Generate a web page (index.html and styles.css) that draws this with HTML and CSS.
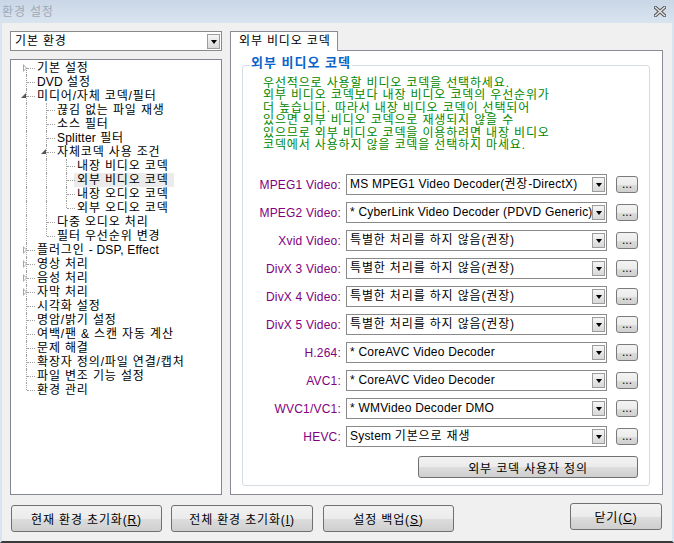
FILE: index.html
```html
<!DOCTYPE html>
<html lang="ko">
<head>
<meta charset="utf-8">
<title>환경 설정</title>
<link rel="stylesheet" href="styles.css">
</head>
<body>
<div class="window">
  <div class="titlebar">
    <span class="title k">환경 설정</span>
    <svg class="close" width="12" height="11" viewBox="0 0 12 11">
      <path d="M1.5 1.5 L10.5 9.5 M10.5 1.5 L1.5 9.5" stroke="#555" stroke-width="3.4" stroke-linecap="square"/>
      <path d="M1.5 1.5 L10.5 9.5 M10.5 1.5 L1.5 9.5" stroke="#e8e8e8" stroke-width="1.4" stroke-linecap="square"/>
    </svg>
  </div>
  <div class="client">
    <div class="main">
      <div class="left">
        <div class="combo combo-main">
          <span class="combo-text k">기본 환경</span>
          <span class="combo-arrow"></span>
        </div>
        <div class="tree">
          <div class="row"><span class="node first"><span class="exp closed"></span></span><span class="label">기본 설정</span></div>
          <div class="row"><span class="node mid"></span><span class="label"><span class="l">DVD</span> 설정</span></div>
          <div class="row"><span class="node mid"><span class="exp open"></span></span><span class="label">미디어/자체 코덱/필터</span></div>
          <div class="row"><span class="ind v"></span><span class="node mid"></span><span class="label">끊김 없는 파일 재생</span></div>
          <div class="row"><span class="ind v"></span><span class="node mid"></span><span class="label">소스 필터</span></div>
          <div class="row"><span class="ind v"></span><span class="node mid"></span><span class="label"><span class="l">Splitter</span> 필터</span></div>
          <div class="row"><span class="ind v"></span><span class="node mid"><span class="exp open"></span></span><span class="label">자체코덱 사용 조건</span></div>
          <div class="row"><span class="ind v"></span><span class="ind v"></span><span class="node mid"></span><span class="label">내장 비디오 코덱</span></div>
          <div class="row"><span class="ind v"></span><span class="ind v"></span><span class="node mid"></span><span class="label selected">외부 비디오 코덱</span></div>
          <div class="row"><span class="ind v"></span><span class="ind v"></span><span class="node mid"></span><span class="label">내장 오디오 코덱</span></div>
          <div class="row"><span class="ind v"></span><span class="ind v"></span><span class="node last"></span><span class="label">외부 오디오 코덱</span></div>
          <div class="row"><span class="ind v"></span><span class="node mid"></span><span class="label">다중 오디오 처리</span></div>
          <div class="row"><span class="ind v"></span><span class="node last"></span><span class="label">필터 우선순위 변경</span></div>
          <div class="row"><span class="node mid"><span class="exp closed"></span></span><span class="label">플러그인 <span class="l">- DSP, Effect</span></span></div>
          <div class="row"><span class="node mid"><span class="exp closed"></span></span><span class="label">영상 처리</span></div>
          <div class="row"><span class="node mid"><span class="exp closed"></span></span><span class="label">음성 처리</span></div>
          <div class="row"><span class="node mid"><span class="exp closed"></span></span><span class="label">자막 처리</span></div>
          <div class="row"><span class="node mid"></span><span class="label">시각화 설정</span></div>
          <div class="row"><span class="node mid"></span><span class="label">명암/밝기 설정</span></div>
          <div class="row"><span class="node mid"></span><span class="label">여백/팬 &amp; 스캔 자동 계산</span></div>
          <div class="row"><span class="node mid"></span><span class="label">문제 해결</span></div>
          <div class="row"><span class="node mid"></span><span class="label">확장자 정의/파일 연결/캡처</span></div>
          <div class="row"><span class="node mid"></span><span class="label">파일 변조 기능 설정</span></div>
          <div class="row"><span class="node last"></span><span class="label">환경 관리</span></div>
        </div>
      </div>
      <div class="right">
        <div class="tabs"><div class="tab k">외부 비디오 코덱</div></div>
        <div class="panel">
          <div class="group">
            <div class="group-title">외부 비디오 코덱</div>
            <p class="info k">우선적으로 사용할 비디오 코덱을 선택하세요.<br>외부 비디오 코덱보다 내장 비디오 코덱의 우선순위가<br>더 높습니다. 따라서 내장 비디오 코덱이 선택되어<br>있으면 외부 비디오 코덱으로 재생되지 않을 수<br>있으므로 외부 비디오 코덱을 이용하려면 내장 비디오<br>코덱에서 사용하지 않을 코덱을 선택하지 마세요.</p>
            <div class="codecs">
              <div class="codec-row"><span class="codec-label">MPEG1 Video:</span><div class="combo"><span class="combo-text">MS MPEG1 Video Decoder(<span class="k">권장</span>-DirectX)</span><span class="combo-arrow"></span></div><button class="more">...</button></div>
              <div class="codec-row"><span class="codec-label">MPEG2 Video:</span><div class="combo"><span class="combo-text">* CyberLink Video Decoder (PDVD Generic)</span><span class="combo-arrow"></span></div><button class="more">...</button></div>
              <div class="codec-row"><span class="codec-label">Xvid Video:</span><div class="combo"><span class="combo-text k">특별한 처리를 하지 않음(권장)</span><span class="combo-arrow"></span></div><button class="more">...</button></div>
              <div class="codec-row"><span class="codec-label">DivX 3 Video:</span><div class="combo"><span class="combo-text k">특별한 처리를 하지 않음(권장)</span><span class="combo-arrow"></span></div><button class="more">...</button></div>
              <div class="codec-row"><span class="codec-label">DivX 4 Video:</span><div class="combo"><span class="combo-text k">특별한 처리를 하지 않음(권장)</span><span class="combo-arrow"></span></div><button class="more">...</button></div>
              <div class="codec-row"><span class="codec-label">DivX 5 Video:</span><div class="combo"><span class="combo-text k">특별한 처리를 하지 않음(권장)</span><span class="combo-arrow"></span></div><button class="more">...</button></div>
              <div class="codec-row"><span class="codec-label">H.264:</span><div class="combo"><span class="combo-text">* CoreAVC Video Decoder</span><span class="combo-arrow"></span></div><button class="more">...</button></div>
              <div class="codec-row"><span class="codec-label">AVC1:</span><div class="combo"><span class="combo-text">* CoreAVC Video Decoder</span><span class="combo-arrow"></span></div><button class="more">...</button></div>
              <div class="codec-row"><span class="codec-label">WVC1/VC1:</span><div class="combo"><span class="combo-text">* WMVideo Decoder DMO</span><span class="combo-arrow"></span></div><button class="more">...</button></div>
              <div class="codec-row"><span class="codec-label">HEVC:</span><div class="combo"><span class="combo-text">System <span class="k">기본으로 재생</span></span><span class="combo-arrow"></span></div><button class="more">...</button></div>
              <div class="custom-row"><button class="btn btn-custom k">외부 코덱 사용자 정의</button></div>
            </div>
          </div>
        </div>
      </div>
    </div>
    <div class="buttons">
      <button class="btn btn-b1 k">현재 환경 초기화(<u>R</u>)</button>
      <button class="btn btn-b2 k">전체 환경 초기화(<u>I</u>)</button>
      <button class="btn btn-b3 k">설정 백업(<u>S</u>)</button>
      <button class="btn btn-close k">닫기(<u>C</u>)</button>
    </div>
  </div>
</div>
</body>
</html>
```
FILE: styles.css
```css
* { box-sizing: border-box; }
html, body { margin: 0; padding: 0; }
body {
  width: 674px; height: 543px; overflow: hidden;
  font-family: "Liberation Sans", "Noto Sans CJK KR", sans-serif;
  font-size: 12px; color: #000; letter-spacing: 0.2px;
}
.k { letter-spacing: 0.85px; }
.l { letter-spacing: 0.2px; }
.window { width: 674px; height: 543px; display: flex; flex-direction: column; background: #f0f0f0; }
.titlebar {
  height: 23px; flex: none;
  background: linear-gradient(#c9d6e5, #d9e4f1);
  display: flex; align-items: center; justify-content: space-between;
  padding: 0 8px 0 2px;
}
.title { color: #9ea9b6; font-size: 12px; line-height: 14px; }
.close { display: block; }
.client {
  flex: 1; display: flex; flex-direction: column;
  border-left: 2px solid #d9e4f1; border-right: 2px solid #d9e4f1; border-bottom: 2px solid #3a3a3a;
  padding: 8px 9px 0 8px;
}
.main { display: flex; gap: 8px; }
.left { width: 212px; display: flex; flex-direction: column; gap: 8px; }
.right { width: 433px; display: flex; flex-direction: column; }

/* combo boxes */
.combo {
  width: 261px; height: 21px; flex: none;
  border: 1px solid #8a8a8a; background: #fff;
  display: flex; align-items: center; padding-left: 3px;
}
.combo-main { width: 212px; height: 20px; padding-left: 4px; }
.combo-text { flex: 1; white-space: nowrap; overflow: hidden; line-height: 15px; }
.combo-arrow {
  width: 13px; height: 15px; flex: none; margin-right: 1px;
  border: 1px solid #9c9c9c;
  background: linear-gradient(#f6f6f6, #d8d8d8);
  display: flex; align-items: center; justify-content: center;
}
.combo-arrow::after {
  content: ""; width: 0; height: 0;
  border-left: 3px solid transparent; border-right: 3px solid transparent;
  border-top: 4px solid #000; margin-top: 1px;
}

/* tree */
.tree {
  height: 436px; background: #fff; border: 1px solid #828790;
  padding: 1px 0 0 5px;
}
.row { display: flex; height: 14px; align-items: stretch; }
.ind, .node { width: 20px; flex: none; position: relative; }
.ind.v::before {
  content: ""; position: absolute; left: 10px; top: 0; bottom: 0;
  border-left: 1px dotted #a0a0a0;
}
.node::before {
  content: ""; position: absolute; left: 10px; top: 0; bottom: 0;
  border-left: 1px dotted #a0a0a0;
}
.node.first::before { top: 7px; }
.node.last::before { bottom: 7px; }
.node::after {
  content: ""; position: absolute; left: 11px; right: 1px; top: 7px;
  border-top: 1px dotted #a0a0a0;
}
.exp { position: absolute; z-index: 1; }
.exp.closed { left: 7px; top: 3px; width: 5px; height: 9px; }
.exp.closed::before {
  content: ""; position: absolute; left: 0; top: 0;
  border-top: 4px solid transparent; border-bottom: 4px solid transparent;
  border-left: 4px solid #a6a6a6;
}
.exp.closed::after {
  content: ""; position: absolute; left: 1px; top: 2px;
  border-top: 2px solid transparent; border-bottom: 2px solid transparent;
  border-left: 2px solid #fff;
}
.exp.open {
  left: 5px; top: 4px; width: 0; height: 0;
  border-left: 5px solid transparent; border-bottom: 5px solid #555;
}
.label { white-space: nowrap; line-height: 14px; padding: 0 3px 0 1px; letter-spacing: 0.85px; }
.label.selected { background: #ebebeb; margin-left: -2px; padding-left: 3px; padding-right: 5px; }

/* tab + panel */
.tabs { display: flex; height: 20px; position: relative; z-index: 1; margin-bottom: -1px; }
.tab {
  width: 108px; height: 20px; background: #fff;
  border: 1px solid #898c95; border-bottom: none;
  padding-left: 8px; line-height: 19px; white-space: nowrap;
}
.panel {
  height: 445px; background: #fff; border: 1px solid #898c95;
  padding: 14px 12px 0 11px;
}
.group {
  border: 1px solid #d5dde3; border-radius: 3px;
  height: 421px;
}
.group-title {
  width: fit-content; margin: -11px 0 0 7px; padding: 0 1px;
  background: #fff; color: #0a63c9; font-weight: bold; font-size: 13px; line-height: 15px;
  letter-spacing: 1px;
}
.info {
  margin: 7px 0 0 20px; color: #008800; line-height: 12.4px; white-space: nowrap;
}
.codecs { width: 395px; margin-top: 23px; display: flex; flex-direction: column; gap: 7px; }
.codec-row { display: flex; align-items: center; height: 21px; }
.codec-label { width: 98px; text-align: right; color: #800080; margin-right: 5px; white-space: nowrap; }
.more {
  width: 22px; height: 17px; margin-left: 9px; padding: 0 0 3px;
  border: 1px solid #7a7a7a; border-radius: 3px;
  background: linear-gradient(#f3f3f3 0%, #ececec 50%, #dcdcdc 51%, #d0d0d0 100%);
  font: 12px/10px "Liberation Sans", sans-serif; color: #000;
  display: flex; align-items: flex-end; justify-content: center;
}
.custom-row { display: flex; justify-content: flex-end; margin-top: 2px; }

/* buttons */
.btn {
  font-family: "Liberation Sans", "Noto Sans CJK KR", sans-serif; font-size: 12px; color: #000;
  border: 1px solid #707070; border-radius: 3px;
  background: linear-gradient(#f2f2f2 0%, #ebebeb 50%, #dddddd 51%, #cfcfcf 100%);
  padding: 0; white-space: nowrap;
}
.btn.k { letter-spacing: 0.85px; }
.btn-custom { width: 220px; height: 22px; }
.buttons { display: flex; align-items: flex-start; padding-top: 8px; }
.btn-b1 { width: 151px; height: 27px; margin: 2px 0 0 1px; }
.btn-b2 { width: 142px; height: 27px; margin: 2px 0 0 9px; }
.btn-b3 { width: 131px; height: 27px; margin: 2px 0 0 10px; }
.btn-close { width: 92px; height: 27px; margin: 0 1px 0 auto; }
```
